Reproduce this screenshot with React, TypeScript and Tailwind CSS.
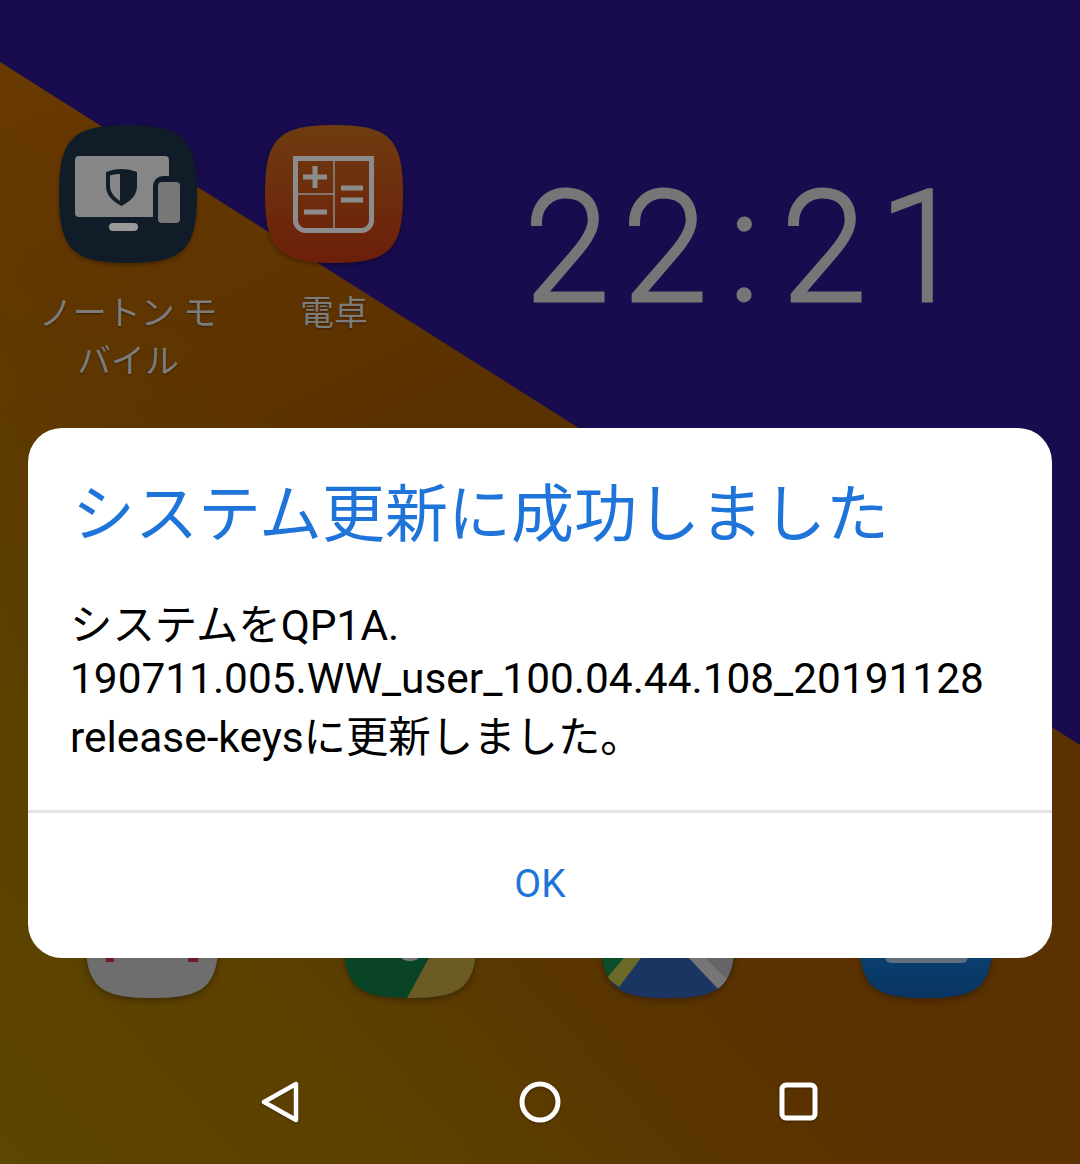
const cjk = "font-['Roboto','Noto_Sans_CJK_JP',sans-serif]";
const squircle = "M67 0C122 0 134 12 134 67C134 122 122 134 67 134C12 134 0 122 0 67C0 12 12 0 67 0z";
const bigSquircle = "M69 0C125 0 138 14 138 69C138 124 125 138 69 138C13 138 0 124 0 69C0 14 13 0 69 0z";
const label = `mt-[26px] text-[34px] leading-[48px] text-center text-[#7c7c7c] [text-shadow:0_1px_2px_rgba(0,0,0,0.4)] ${cjk}`;

function NortonIcon() {
  return (
    <svg viewBox="0 0 138 138" width="138" height="138" className="drop-shadow-[0_2px_2px_rgba(0,0,0,0.3)]">
      <path d={bigSquircle} fill="#101d29" />
      <path d="M20 31h86a4 4 0 0 1 4 4v16h-6a10 10 0 0 0-10 10v31H20a4 4 0 0 1-4-4V35a4 4 0 0 1 4-4z" fill="#868686" />
      <rect x="99" y="57" width="22" height="41" rx="4" fill="#777" />
      <rect x="50" y="98" width="29" height="8" rx="4" fill="#999" />
      <path d="M47 47c10-4 21-4 31 0v14c0 9-6 15-15.500 20C53 76 47 70 47 61z" fill="#101d29" />
      <path d="M61 49c-3 0-7 .5-10 1.500V61c0 6 4 11 10 15z" fill="#868686" />
    </svg>
  );
}

function CalcIcon() {
  return (
    <svg viewBox="0 0 138 138" width="138" height="138" fill="none" stroke="#8c8c8c" className="drop-shadow-[0_2px_2px_rgba(0,0,0,0.3)]">
      <defs>
        <linearGradient id="calc" x1="0" y1="0" x2="0" y2="1">
          <stop offset="0" stopColor="#6f3c10" />
          <stop offset="1" stopColor="#6c1f0a" />
        </linearGradient>
      </defs>
      <path d={bigSquircle} fill="url(#calc)" stroke="none" />
      <path d="M30.500 33.500h76v62a10 10 0 0 1-10 10h-56a10 10 0 0 1-10-10z" strokeWidth="5" />
      <path d="M69 33v72M31 69h38" strokeWidth="1.500" />
      <path d="M38 52h24M50 41v22M39 87h23M76 63h22M76 75h22" strokeWidth="5" />
    </svg>
  );
}

function HomeIcons() {
  return (
    <div className="flex pt-[125px] pl-[28px]">
      <div className="w-[200px] flex flex-col items-center">
        <NortonIcon />
        <div className={label}>
          ノートン モ<br />バイル
        </div>
      </div>
      <div className="w-[212px] flex flex-col items-center">
        <CalcIcon />
        <div className={label}>電卓</div>
      </div>
      <div className="ml-[86px] mt-[25px] font-['Roboto',sans-serif] font-thin text-[#767676] text-[150px] leading-[196px] tracking-[16px] whitespace-nowrap [-webkit-text-stroke:7px_#767676]">
        22<span className="mx-[9px]">:</span>21
      </div>
    </div>
  );
}

function DockIcons() {
  const shadow = "drop-shadow-[0_2px_3px_rgba(0,0,0,0.35)]";
  return (
    <div className="flex pl-[85px] gap-[124px] pt-[864px] absolute top-0 left-0">
      <svg viewBox="0 0 134 134" width="134" height="134" className={shadow}>
        <path d={squircle} fill="#6e6e6e" />
        <path d="M21 90h8v8h-8zM103 90h10v8h-10z" fill="#6b1a20" />
      </svg>
      <svg viewBox="0 0 134 134" width="134" height="134" className={shadow}>
        <clipPath id="dock-green"><path d={squircle} /></clipPath>
        <g clipPath="url(#dock-green)">
          <rect width="134" height="134" fill="#0a4426" />
          <path d="M86 94 64 134H134V94z" fill="#6b5a22" />
          <ellipse cx="67" cy="94" rx="8" ry="3" fill="#777" />
        </g>
      </svg>
      <svg viewBox="0 0 134 134" width="134" height="134" className={shadow}>
        <clipPath id="dock-map"><path d={squircle} /></clipPath>
        <g clipPath="url(#dock-map)">
          <rect width="134" height="134" fill="#1b3563" />
          <path d="M0 90H28L8 114H0z" fill="#0a4f2c" />
          <path d="M26 90H43L18 123 6 114z" fill="#6b6a28" />
          <path d="M100 90H134V125z" fill="#666" />
          <path d="M84 90H100L128 117 118 126z" fill="#767676" />
        </g>
      </svg>
      <svg viewBox="0 0 134 134" width="134" height="134" className={shadow}>
        <defs>
          <linearGradient id="dock-blue" x1="0" y1="0" x2="0" y2="1">
            <stop offset="0.6" stopColor="#0a4274" />
            <stop offset="1" stopColor="#093462" />
          </linearGradient>
        </defs>
        <path d={squircle} fill="url(#dock-blue)" />
        <path d="M26 90H109V93a6 6 0 0 1-6 6H32a6 6 0 0 1-6-6z" fill="#5f6d7d" />
      </svg>
    </div>
  );
}

function NavBar() {
  return (
    <div className="absolute left-0 right-0 bottom-0 h-[124px] flex items-center justify-center gap-[215px] drop-shadow-[0_1px_1px_rgba(0,0,0,0.3)]">
      <svg width="44" height="44" viewBox="0 0 44 44" fill="none" stroke="#fff" strokeWidth="4.500" strokeLinejoin="round">
        <path d="M37 4v36L5 22z" />
      </svg>
      <svg width="44" height="44" viewBox="0 0 44 44" fill="none" stroke="#fff" strokeWidth="5">
        <circle cx="22" cy="22" r="18" />
      </svg>
      <svg width="44" height="44" viewBox="0 0 44 44" fill="none" stroke="#fff" strokeWidth="5">
        <rect x="5" y="5" width="33" height="33" rx="4" />
      </svg>
    </div>
  );
}

export default function App() {
  return (
    <div className="relative w-[1080px] h-[1164px] overflow-hidden bg-[#180c4e]">
      {/* wallpaper */}
      <svg className="absolute inset-0" width="1080" height="1164" viewBox="0 0 1080 1164">
        <defs>
          <linearGradient id="wall" gradientUnits="userSpaceOnUse" x1="0" y1="60" x2="220" y2="520">
            <stop offset="0" stopColor="#693a00" />
            <stop offset="1" stopColor="#5a3100" />
          </linearGradient>
          <linearGradient id="wall2" gradientUnits="userSpaceOnUse" x1="0" y1="1164" x2="640" y2="600">
            <stop offset="0" stopColor="#5c4600" />
            <stop offset="0.45" stopColor="#5c4200" stopOpacity="0.8" />
            <stop offset="0.85" stopColor="#5c3800" stopOpacity="0" />
          </linearGradient>
        </defs>
        <path d="M0 62 1080 745V1164H0z" fill="url(#wall)" />
        <path d="M0 62 1080 745V1164H0z" fill="url(#wall2)" />
      </svg>

      <div className="absolute inset-0">
        <HomeIcons />
        <DockIcons />
      </div>

      <NavBar />

      <div className="relative mx-[28px] mt-[428px] h-[530px] rounded-[34px] bg-white flex flex-col">
        <h1 className={`pl-[44px] pt-[47px] text-[63px] leading-[80px] text-[#1f74d9] whitespace-nowrap ${cjk}`}>
          システム更新に成功しました
        </h1>
        <div className={`pl-[42px] mt-[40px] text-[42.400px] text-black whitespace-nowrap ${cjk}`}>
          <div className="h-[59px] leading-[62px]">システムをQP1A.</div>
          <div className="h-[56px] leading-[50px]">190711.005.WW_user_100.04.44.108_20191128</div>
          <div className="h-[60px] leading-[56px]">release-keysに更新しました。</div>
        </div>
        <div className="mt-auto h-[148px] border-t-[3px] border-[#e4e4e4] flex items-center justify-center pb-[3px]">
          <span className="font-['Roboto',sans-serif] text-[39px] text-[#1f74d9]">OK</span>
        </div>
      </div>
    </div>
  );
}
